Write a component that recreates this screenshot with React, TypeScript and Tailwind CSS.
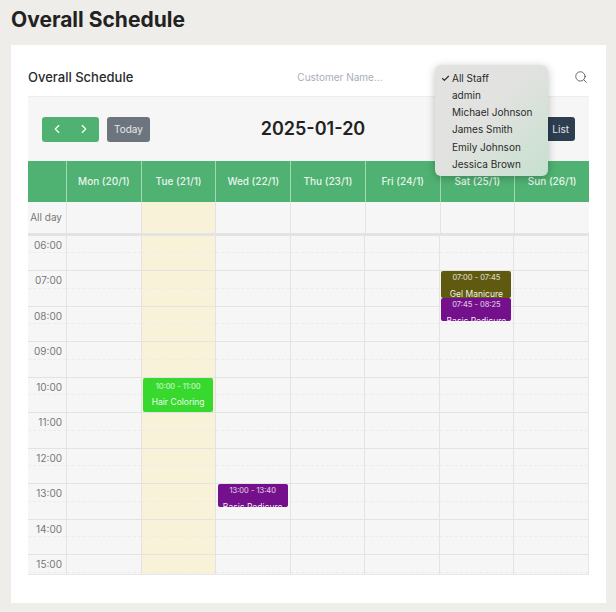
import { ChevronLeft, ChevronRight, Search, Check } from "lucide-react";
import type { ReactNode } from "react";

const days = ["Mon (20/1)", "Tue (21/1)", "Wed (22/1)", "Thu (23/1)", "Fri (24/1)", "Sat (25/1)", "Sun (26/1)"];
const hours = ["06:00", "07:00", "08:00", "09:00", "10:00", "11:00", "12:00", "13:00", "14:00", "15:00"];
const staff = ["All Staff", "admin", "Michael Johnson", "James Smith", "Emily Johnson", "Jessica Brown"];

type Ev = { day: number; hour: number; time: string; title: string; color: string; top: number; height: number; pad: number };
const events: Ev[] = [
  { day: 5, hour: 1, time: "07:00 - 07:45", title: "Gel Manicure", color: "bg-[#5f5a10]", top: 0, height: 27, pad: 2 },
  { day: 5, hour: 1, time: "07:45 - 08:25", title: "Basic Pedicure", color: "bg-[#75108c]", top: 27, height: 23, pad: 2 },
  { day: 1, hour: 4, time: "10:00 - 11:00", title: "Hair Coloring", color: "bg-[#38d92f]", top: 0, height: 34, pad: 4 },
  { day: 2, hour: 7, time: "13:00 - 13:40", title: "Basic Pedicure", color: "bg-[#75108c]", top: 0, height: 23, pad: 2 },
];

function HourCell({ children, today }: { children?: ReactNode; today?: boolean }) {
  return (
    <div className={`relative h-[35.5px] shrink-0 border-t border-[#e3e3e3] ${today ? "bg-[#f7f2d8]" : ""}`}>
      <div className="h-[17.5px] border-b border-dashed border-[#ececec]" />
      {children}
    </div>
  );
}

export default function App() {
  return (
    <div className="h-[612px] w-[616px] overflow-hidden bg-[#eeede9] font-['Inter',sans-serif] text-[#212121]">
      <h1 className="flex h-[45px] items-start pl-[11px] pt-[8px] text-[21px] font-bold leading-[24px] text-[#222222]">Overall Schedule</h1>
      <div className="relative ml-[11px] h-[558px] w-[595px] bg-white px-[17px]">
        <div className="flex h-[51px] items-center pt-[13px]">
          <div className="text-[13px] font-medium leading-[16px] text-[#2a2a2a]">Overall Schedule</div>
          <input
            readOnly
            placeholder="Customer Name..."
            className="ml-[164px] w-[120px] bg-transparent text-[10px] text-[#555] outline-none placeholder:text-[#a9adb9]"
          />
          <Search className="ml-auto mr-[1px] -mt-[1px] h-[14px] w-[14px] text-[#555]" strokeWidth={1.5} />
        </div>

        <div className="w-[561px] border-t border-[#eeeeee] bg-[#f6f6f6]">
          <div className="relative flex h-[64px] items-center pl-[14px] pr-[14px]">
            <div className="flex h-[25px] w-[57px] items-center justify-around rounded-[3px] bg-[#4fb272] px-[2px] text-white">
              <ChevronLeft className="h-[14px] w-[14px]" strokeWidth={2} />
              <ChevronRight className="h-[14px] w-[14px]" strokeWidth={2} />
            </div>
            <div className="ml-[8px] flex h-[25px] w-[43px] items-center justify-center rounded-[3px] bg-[#6c757d] text-[10px] text-[#e6e8ea]">Today</div>
            <div className="absolute left-[9px] right-0 top-[20px] text-center text-[18px] font-semibold leading-[24px] text-[#222222]">2025-01-20</div>
            <div className="ml-auto flex h-[24px] w-[50px] items-center justify-end rounded-[3px] bg-[#2c3e50] pr-[6px] text-[10px] text-[#e6e8ea]">List</div>
          </div>

          <div className="grid h-[41px] grid-cols-[38px_repeat(7,1fr)] bg-[#4fb272]">
            <div />
            {days.map((d) => (
              <div key={d} className="flex items-center justify-center border-l border-[#a5d6b5] text-[10px] font-medium text-[#e8f5ec]">{d}</div>
            ))}
          </div>

          <div className="grid h-[32.5px] grid-cols-[38px_repeat(7,1fr)] border-b-2 border-[#e3e3e3]">
            <div className="flex items-center justify-end pr-[4px] text-[10px] text-[#777777]">All day</div>
            {days.map((d, i) => (
              <div key={d} className={`border-l border-[#e3e3e3] ${i === 1 ? "bg-[#f7f2d8]" : ""}`} />
            ))}
          </div>

          <div className="grid h-[340.5px] grid-cols-[38px_repeat(7,1fr)] overflow-hidden border-b border-r border-[#e8e8e8]">
            <div className="flex flex-col">
              {hours.map((h) => (
                <HourCell key={h}>
                  <span className="absolute right-[4px] top-[2px] text-[10px] leading-[14px] text-[#777777]">{h}</span>
                </HourCell>
              ))}
            </div>
            {days.map((d, di) => (
              <div key={d} className="flex flex-col border-l border-[#e3e3e3]">
                {hours.map((h, hi) => (
                  <HourCell key={h} today={di === 1}>
                    {events
                      .filter((e) => e.day === di && e.hour === hi)
                      .map((e) => (
                        <div
                          key={e.time}
                          style={{ top: e.top, height: e.height, paddingTop: e.pad }}
                          className={`absolute left-[1.5px] right-[2px] z-10 overflow-hidden rounded-[2px] text-center text-white ${e.color}`}
                        >
                          <div className="text-[7.5px] leading-[10px] text-white/80">{e.time}</div>
                          <div className="pt-[4.5px] text-[8.5px] leading-[12px] text-white/95">{e.title}</div>
                        </div>
                      ))}
                  </HourCell>
                ))}
              </div>
            ))}
          </div>
        </div>

        <div className="absolute left-[424px] top-[20px] z-20 flex h-[111px] w-[113px] flex-col rounded-[6px] bg-gradient-to-br from-[#e2e2e0] from-45% to-[#c6e0cf] pt-[4.5px] text-[10px] leading-[17.25px] text-[#2a2a2a] shadow-[0_2px_8px_rgba(0,0,0,0.25)]">
          {staff.map((s, i) => (
            <div key={s} className="relative h-[17.25px] shrink-0 pl-[17px]">
              {i === 0 && <Check className="absolute left-[6px] top-[4px] h-[9px] w-[9px]" strokeWidth={3} />}
              {s}
            </div>
          ))}
        </div>
      </div>
    </div>
  );
}
